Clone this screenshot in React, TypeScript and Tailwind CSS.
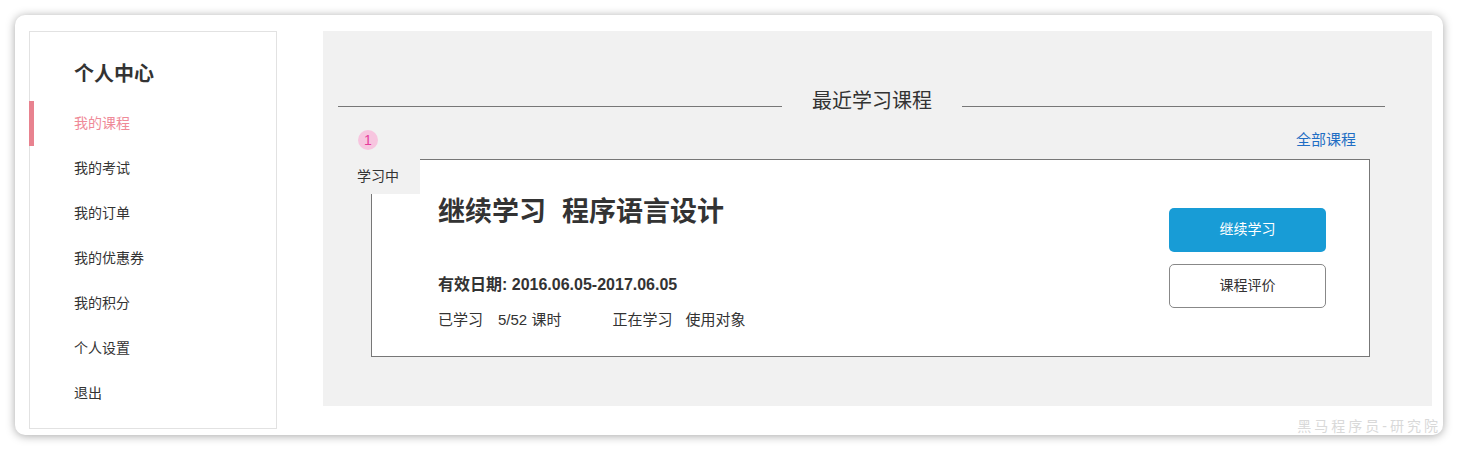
const MENU = ['我的课程', '我的考试', '我的订单', '我的优惠券', '我的积分', '个人设置', '退出']

const FONT = "font-['Liberation_Sans','Noto_Sans_CJK_SC',sans-serif]"

function Sidebar() {
  return (
    <div className="w-[248px] h-[398px] shrink-0 border border-[#e2e2e2] bg-white">
      {/* title */}
      <h2 className="pl-[44px] pt-[28px] text-[20px] leading-[28px] font-semibold text-[#333]">个人中心</h2>
      <ul className="mt-[13px]">
        {MENU.map((item, i) => (
          <li
            key={item}
            className={
              i === 0
                ? '-ml-px h-[45px] flex items-center border-l-[5px] border-[#e8828f] pl-[40px] text-[14px] text-[#ef8a98]'
                : '-ml-px h-[45px] flex items-center border-l-[5px] border-transparent pl-[40px] text-[14px] text-[#333]'
            }
          >
            {item}
          </li>
        ))}
      </ul>
    </div>
  )
}

function CourseCard() {
  return (
    <div className="relative ml-[48px] mr-[62px] mt-[7px] h-[198px] border border-[#777] bg-white flex justify-between">
      {/* ── tab over the card corner ── */}
      <div className="absolute -left-[34px] -top-px w-[82px] h-[35px] bg-[#f1f1f1] flex items-center pl-[19px] text-[14px] text-[#333]">
        学习中
      </div>

      <div className="pl-[66px] pt-[34px]">
        <h3 className="text-[27px] leading-[36px] font-bold text-[#333]">
          继续学习<span className="ml-[16px]">程序语言设计</span>
        </h3>
        <p className="mt-[45px] text-[16px] leading-[20px] font-bold text-[#333]">有效日期: 2016.06.05-2017.06.05</p>
        <p className="mt-[15px] text-[15px] leading-[20px] text-[#333] flex">
          <span>已学习</span>
          <span className="ml-[15px]">5/52 课时</span>
          <span className="ml-[51px]">正在学习</span>
          <span className="ml-[13px]">使用对象</span>
        </p>
      </div>

      <div className="pt-[48px] pr-[43px] flex flex-col gap-[12px]">
        <button className="w-[157px] h-[44px] rounded-[5px] bg-[#189cd6] text-white text-[14px]">继续学习</button>
        <button className="w-[157px] h-[44px] rounded-[5px] border border-[#888] bg-white text-[#333] text-[14px]">课程评价</button>
      </div>
    </div>
  )
}

export default function App() {
  return (
    <div className={`w-[1458px] h-[452px] bg-white pt-[15px] pl-[15px] ${FONT}`}>
      <div className="relative w-[1428px] h-[420px] rounded-[10px] bg-white shadow-[0_1px_10px_rgba(0,0,0,0.35)] flex pl-[14px] pt-[16px] gap-[46px]">
        <Sidebar />

        {/* ── main panel ── */}
        <div className="w-[1109px] h-[375px] bg-[#f1f1f1] pt-[58px]">
          <div className="flex items-start ml-[15px] mr-[47px]">
            <div className="w-[444px] h-px bg-[#777] mt-[17px]" />
            <h2 className="px-[30px] text-[20px] leading-[24px] text-[#333]">最近学习课程</h2>
            <div className="flex-1 h-px bg-[#777] mt-[17px]" />
          </div>

          <div className="flex items-center justify-between ml-[35px] mr-[76px] mt-[16px]">
            <span className="w-[20px] h-[20px] rounded-full bg-[#f7c5df] text-[#e63d9b] text-[14px] flex items-center justify-center">1</span>
            <a className="text-[15px] text-[#1f6ec4]">全部课程</a>
          </div>

          <CourseCard />
        </div>

        {/* watermark */}
        <span className="absolute right-[2px] -bottom-[2px] text-[14px] tracking-[3px] text-[#d9d9d9]">黑马程序员-研究院</span>
      </div>
    </div>
  )
}
